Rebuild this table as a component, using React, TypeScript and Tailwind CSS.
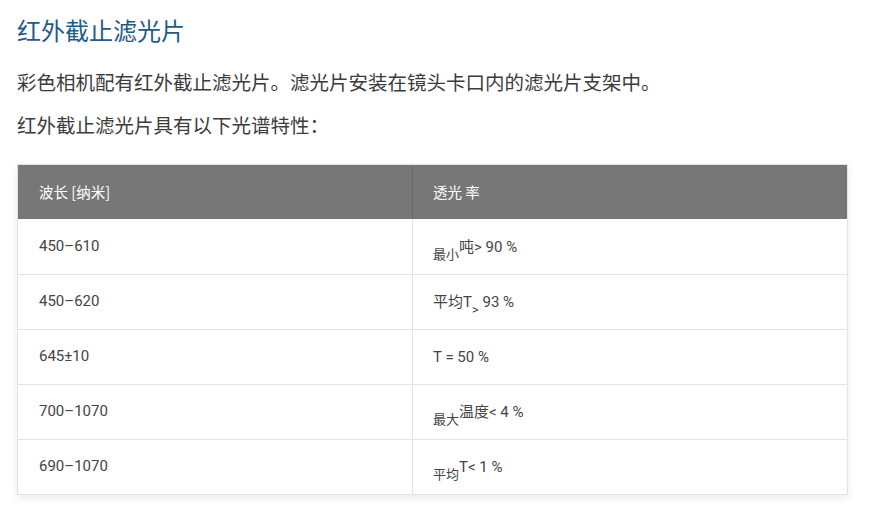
import React from "react";

const sub = "text-[13px] align-[-4px]";
const rows: { a: string; b: React.ReactNode }[] = [
  { a: "450–610", b: (<><sub className={sub}>最小</sub>吨&gt; 90 %</>) },
  { a: "450–620", b: (<>平均T<sub className={sub}>&gt;</sub> 93 %</>) },
  { a: "645±10", b: (<>T = 50 %</>) },
  { a: "700–1070", b: (<><sub className={sub}>最大</sub>温度&lt; 4 %</>) },
  { a: "690–1070", b: (<><sub className={sub}>平均</sub>T&lt; 1 %</>) },
];

export default function App() {
  return (
    <div className="bg-white w-[877px] h-[511px] px-[17px] pt-[14px]" style={{ fontFamily: '"Noto Sans CJK SC", sans-serif' }}>
      <h1 className="text-[24px] leading-[32px] text-[#1d5b8c] font-normal">红外截止滤光片</h1>
      <p className="mt-[22px] text-[19.5px] leading-[28px] text-[#3c3c3c]">彩色相机配有红外截止滤光片。滤光片安装在镜头卡口内的滤光片支架中。</p>
      <p className="mt-[15px] text-[19.5px] leading-[28px] text-[#3c3c3c]">红外截止滤光片具有以下光谱特性：</p>
      <div className="mt-[25px] w-[831px] border border-[#e3e3e3] shadow-[0_3px_8px_rgba(0,0,0,0.08)]">
        <div className="flex bg-[#777777] text-white text-[14.5px] h-[54px] items-center">
          <div className="w-[395px] pl-[21px] border-r border-[#6a6a6a] h-full flex items-center">波长 [纳米]</div>
          <div className="flex-1 pl-[20px]">透光 率</div>
        </div>
        {rows.map((r, i) => (
          <div key={i} className={`flex h-[55px] text-[15px] text-[#444] ${i > 0 ? "border-t border-[#e3e3e3]" : ""}`} style={{ fontFamily: 'Roboto, "Noto Sans CJK SC", sans-serif' }}>
            <div className="w-[395px] pl-[21px] border-r border-[#e3e3e3] flex items-center pb-[1px]">{r.a}</div>
            <div className="flex-1 pl-[20px] flex items-center"><span className="leading-[20px]">{r.b}</span></div>
          </div>
        ))}
      </div>
    </div>
  );
}
